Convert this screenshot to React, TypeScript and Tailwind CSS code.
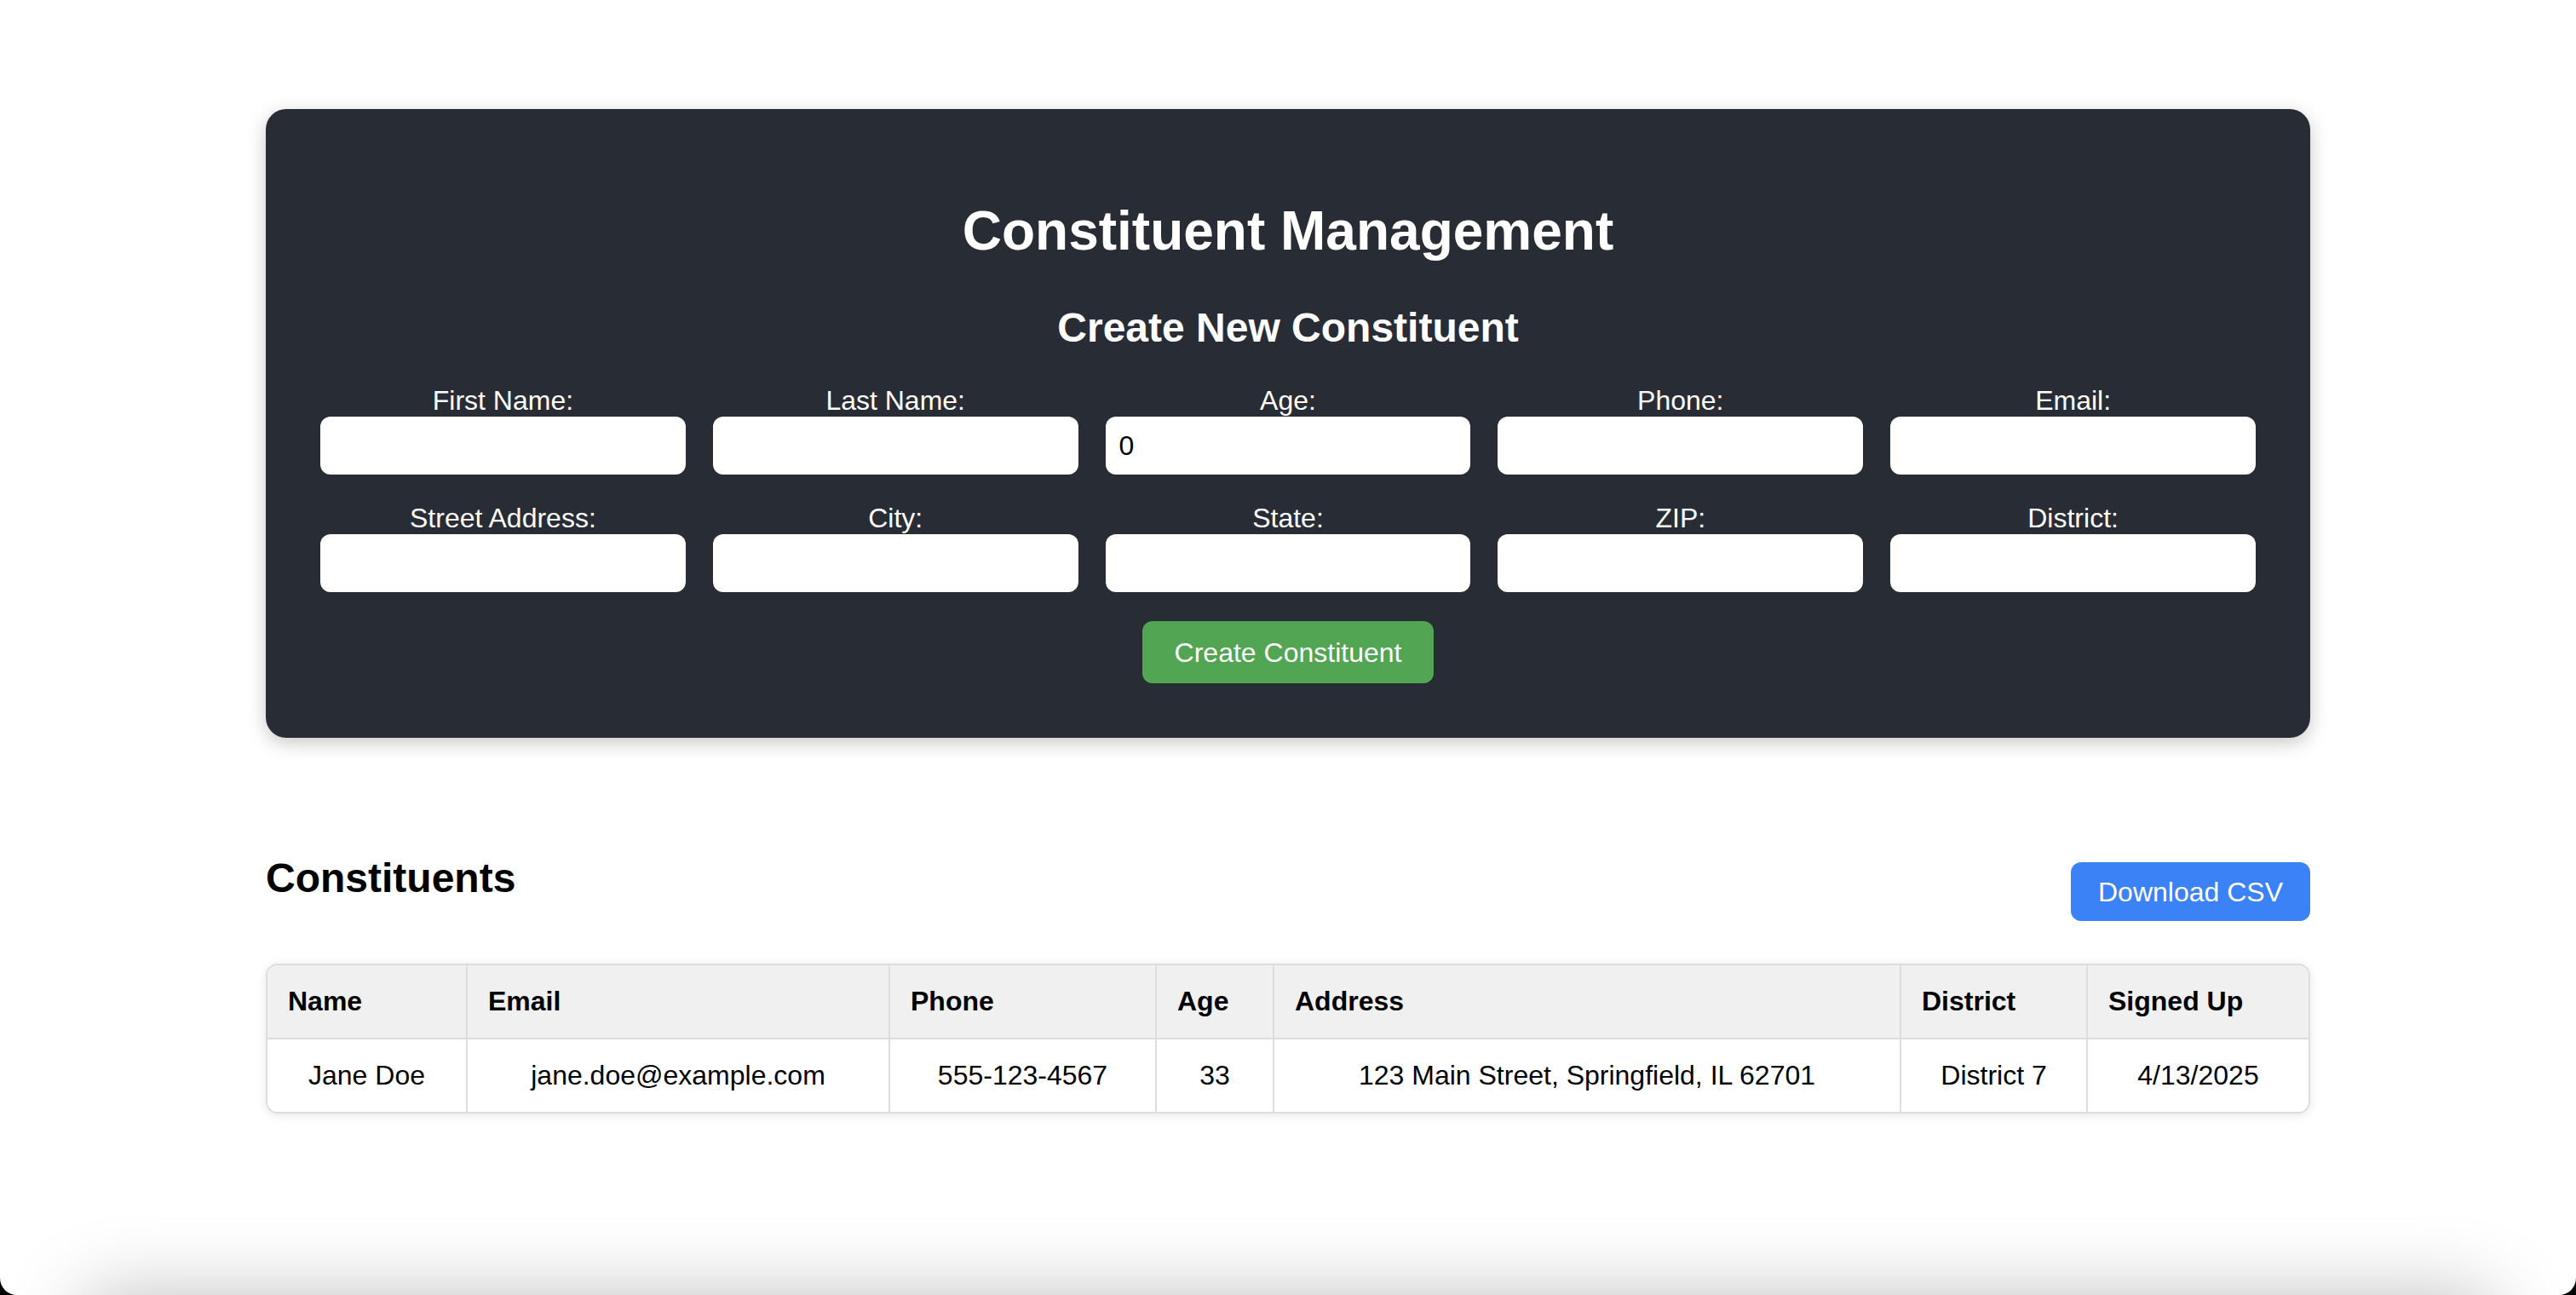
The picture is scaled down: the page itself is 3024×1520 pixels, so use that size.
import React from 'react';

const fields = [
  { label: 'First Name:', value: '' },
  { label: 'Last Name:', value: '' },
  { label: 'Age:', value: '0' },
  { label: 'Phone:', value: '' },
  { label: 'Email:', value: '' },
  { label: 'Street Address:', value: '' },
  { label: 'City:', value: '' },
  { label: 'State:', value: '' },
  { label: 'ZIP:', value: '' },
  { label: 'District:', value: '' },
];

const columns = [
  { name: 'Name', width: 234 },
  { name: 'Email', width: 496 },
  { name: 'Phone', width: 313 },
  { name: 'Age', width: 138 },
  { name: 'Address', width: 736 },
  { name: 'District', width: 219 },
  { name: 'Signed Up', width: 260 },
];

const rows = [
  ['Jane Doe', 'jane.doe@example.com', '555-123-4567', '33', '123 Main Street, Springfield, IL 62701', 'District 7', '4/13/2025'],
];

const App = () => {
  return (
    <div className="h-[1520px] overflow-hidden bg-black font-['Liberation_Sans',Arial,sans-serif]">
      <div className="flex h-full flex-col overflow-hidden rounded-b-[20px] bg-white">
        <div className="mx-auto w-[2400px] pt-[128px]">
          {/* Create form panel */}
          <div className="rounded-[24px] bg-[#282c34] px-[64px] pt-[106px] pb-[64px] text-center text-white shadow-[0_6px_22px_rgba(0,0,0,0.22)]">
            <h1 className="text-[64px] font-bold leading-[74px]">Constituent Management</h1>
            <h2 className="mt-[49px] text-[48px] font-bold leading-[55px]">Create New Constituent</h2>
            <div className="mt-[40px] grid grid-cols-5 gap-x-[32px] gap-y-[33px]">
              {fields.map((f) => (
                <div key={f.label} className="flex flex-col">
                  <label className="block text-[32px] leading-[37px]">{f.label}</label>
                  <input
                    defaultValue={f.value}
                    className="h-[68px] w-full rounded-[12px] border-0 bg-white px-[16px] text-left text-[32px] text-black outline-none"
                  />
                </div>
              ))}
            </div>
            <button className="mt-[34px] h-[73px] rounded-[12px] bg-[#52a552] px-[38px] text-[32px] text-white">
              Create Constituent
            </button>
          </div>

          {/* Constituents list */}
          <div className="mt-[137px] flex items-start justify-between">
            <h2 className="text-[48px] font-bold leading-[55px] text-black">Constituents</h2>
            <button className="mt-[9px] h-[69px] rounded-[12px] bg-[#3b82f6] px-[32px] text-[32px] text-white">
              Download CSV
            </button>
          </div>

          <div className="mt-[50px] overflow-hidden rounded-[14px] border-2 border-[#dddddd] shadow-[0_2px_12px_rgba(0,0,0,0.1)]">
            <table className="w-full table-fixed border-collapse text-[32px] leading-[37px] text-black">
              <colgroup>
                {columns.map((c) => (
                  <col key={c.name} style={{ width: c.width }} />
                ))}
              </colgroup>
              <thead>
                <tr className="bg-[#f0f0f0]">
                  {columns.map((c, i) => (
                    <th
                      key={c.name}
                      className={`border-b-2 border-[#dddddd] p-[24px] text-left font-bold ${i > 0 ? 'border-l-2' : ''}`}
                    >
                      {c.name}
                    </th>
                  ))}
                </tr>
              </thead>
              <tbody>
                {rows.map((r) => (
                  <tr key={r[0]} className="bg-white">
                    {r.map((cell, i) => (
                      <td
                        key={i}
                        className={`border-[#dddddd] p-[24px] text-center whitespace-nowrap ${i > 0 ? 'border-l-2' : ''}`}
                      >
                        {cell}
                      </td>
                    ))}
                  </tr>
                ))}
              </tbody>
            </table>
          </div>
        </div>

        <div className="mx-[100px] mt-auto mb-[-200px] h-[200px] shrink-0 bg-white shadow-[0_0_90px_rgba(0,0,0,0.25)]" />
      </div>
    </div>
  );
};

export default App;
